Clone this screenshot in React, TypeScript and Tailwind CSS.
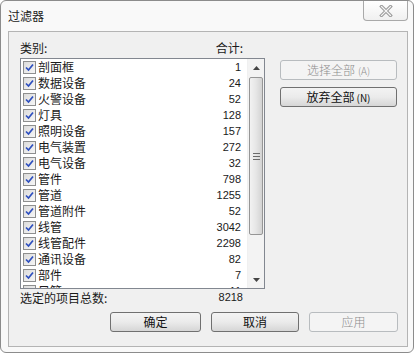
import React from "react";

const items: [string, string][] = [
  ["剖面框", "1"],
  ["数据设备", "24"],
  ["火警设备", "52"],
  ["灯具", "128"],
  ["照明设备", "157"],
  ["电气装置", "272"],
  ["电气设备", "32"],
  ["管件", "798"],
  ["管道", "1255"],
  ["管道附件", "52"],
  ["线管", "3042"],
  ["线管配件", "2298"],
  ["通讯设备", "82"],
  ["部件", "7"],
  ["风管", "11"],
];

const cjk = { fontFamily: '"Noto Sans CJK SC", "Noto Sans", sans-serif' };
const num = { fontFamily: '"Liberation Sans", Arial, sans-serif' };

function Check() {
  return (
    <div className="w-[13px] h-[13px] border border-[#8e8f8f] bg-gradient-to-br from-[#dcdcdc] to-[#f6f6f6] flex items-center justify-center shrink-0">
      <svg width="9" height="9" viewBox="0 0 9 9">
        <path d="M1 4.5 L3.5 7 L8 1.5" fill="none" stroke="#2d4fbf" strokeWidth="1.7" />
      </svg>
    </div>
  );
}

function Btn({ label, disabled, w, h = 20 }: { label: React.ReactNode; disabled?: boolean; w: number; h?: number }) {
  return (
    <div
      style={{ width: w, height: h, ...cjk }}
      className={
        disabled
          ? "flex items-center justify-center rounded-[3px] border border-[#b8bcbf] bg-[#f4f4f4] text-[#8d8d8d] text-[12px] font-light leading-none"
          : "flex items-center justify-center rounded-[3px] border border-[#707070] bg-gradient-to-b from-[#f3f3f3] via-[#ebebeb] to-[#d6d6d6] text-[#111] text-[12px] leading-none"
      }
    >
      {label}
    </div>
  );
}

export default function App() {
  return (
    <div className="w-[415px] h-[355px] bg-white">
      <div className="w-[414px] h-[353px] border border-[#8c8c8c] rounded-[6px] bg-[#f9f9f9] flex flex-col">
        <div className="h-[30px] flex items-start">
          <div className="pl-[7px] pt-[7px] text-[12px] leading-[16px] text-[#222]" style={cjk}>
            过滤器
          </div>
          <div className="ml-auto mr-[5px] w-[45px] h-[20px] border border-t-0 border-[#a9a9a9] rounded-b-[4px] bg-gradient-to-b from-[#ffffff] to-[#f0f0f0] flex items-center justify-center">
            <svg width="14" height="12" viewBox="0 0 14 12">
              <path d="M2.5 1.5 L11.5 10.5 M11.5 1.5 L2.5 10.5" stroke="#9a9a9a" strokeWidth="3.2" strokeLinecap="square" />
              <path d="M2.5 1.5 L11.5 10.5 M11.5 1.5 L2.5 10.5" stroke="#f6f6f6" strokeWidth="1.2" strokeLinecap="square" />
            </svg>
          </div>
        </div>
        <div className="ml-[7px] w-[400px] h-[316px] border border-[#b4b4b4] bg-[#f0f0f0] flex flex-col">
          <div className="flex">
            <div className="ml-[11px] w-[245px] flex flex-col">
              <div className="mt-[8px] h-[15px] flex justify-between pr-[22px] text-[12px] leading-[15px] text-[#1a1a1a]" style={cjk}>
                <span>类别:</span>
                <span>合计:</span>
              </div>
              <div className="mt-[3px] h-[231px] border border-[#828790] bg-white flex overflow-hidden">
                <div className="flex-1 flex flex-col overflow-hidden">
                  {items.map(([n, c]) => (
                    <div key={n} className="h-[16px] shrink-0 flex items-center pl-[2px] pr-[6px]">
                      <Check />
                      <span className="ml-[2px] text-[12px] leading-[16px] text-[#1a1a1a]" style={cjk}>
                        {n}
                      </span>
                      <span className="ml-auto text-[11px] leading-[16px] text-[#1a1a1a]" style={num}>
                        {c}
                      </span>
                    </div>
                  ))}
                </div>
                <div className="w-[17px] shrink-0 bg-[#f3f3f3] flex flex-col border-l border-[#f0f0f0]">
                  <div className="h-[17px] flex items-center justify-center">
                    <svg width="7" height="4" viewBox="0 0 7 4">
                      <path d="M0 4 L3.5 0 L7 4 Z" fill="#444" />
                    </svg>
                  </div>
                  <div className="mt-[1px] h-[158px] mx-[1px] rounded-[2px] border border-[#969696] bg-gradient-to-r from-[#f2f2f2] via-[#e6e6e6] to-[#d3d3d3] flex items-center justify-center">
                    <svg width="7" height="7" viewBox="0 0 7 7">
                      <path d="M0 0.5 H7 M0 3.5 H7 M0 6.5 H7" stroke="#6b6b6b" strokeWidth="1" />
                    </svg>
                  </div>
                  <div className="flex-1" />
                  <div className="h-[17px] flex items-center justify-center">
                    <svg width="7" height="4" viewBox="0 0 7 4">
                      <path d="M0 0 L3.5 4 L7 0 Z" fill="#444" />
                    </svg>
                  </div>
                </div>
              </div>
              <div className="mt-[1px] h-[15px] flex items-center pr-[22px] text-[#1a1a1a]">
                <span className="text-[12px] leading-[15px]" style={cjk}>
                  选定的项目总数:
                </span>
                <span className="ml-auto text-[11px] leading-[15px]" style={num}>
                  8218
                </span>
              </div>
            </div>
            <div className="ml-[15px] mt-[28px] flex flex-col">
              <Btn w={117} label={<span>选择全部<span className="text-[10px] ml-[3px]">(A)</span></span>} disabled />
              <div className="h-[7px]" />
              <Btn w={117} label={<span>放弃全部<span className="text-[10px] ml-[2px]">(N)</span></span>} />
            </div>
          </div>
          <div className="mt-[7px] flex justify-end pr-[9px] gap-[10px]">
            <Btn w={91} label="确定" />
            <Btn w={88} label="取消" />
            <Btn w={89} label="应用" disabled />
          </div>
        </div>
      </div>
    </div>
  );
}
